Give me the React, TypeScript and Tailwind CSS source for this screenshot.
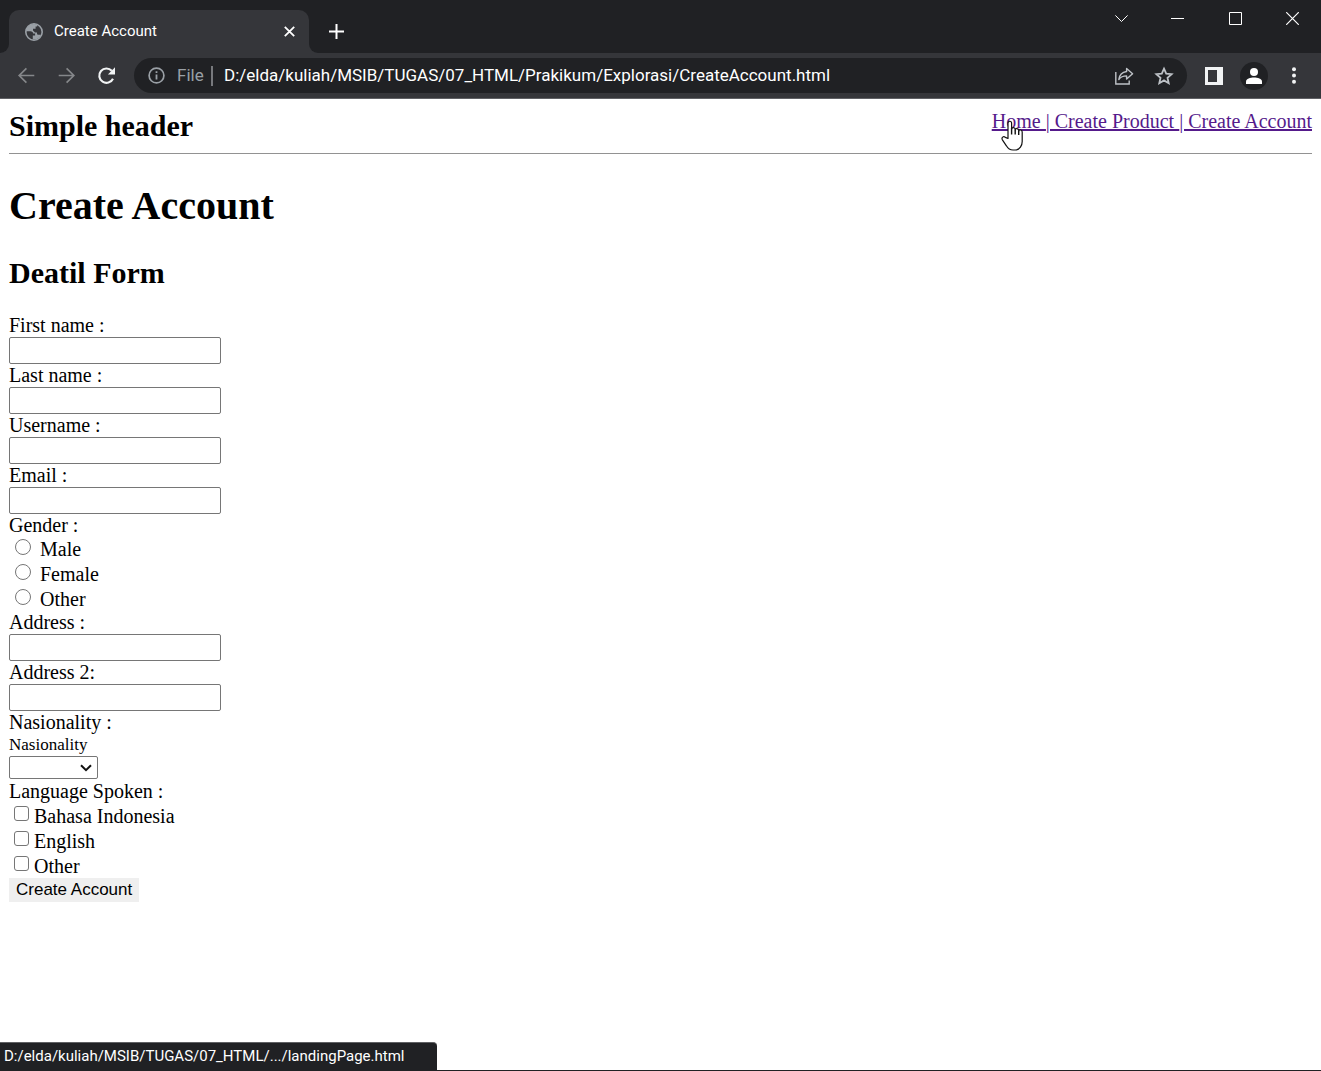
import React from 'react';

function BrowserTab() {
  return (
    <div className="relative flex h-[43px] w-[300px] items-center rounded-t-[10px] bg-[#35363a] pl-4 pr-3">
      <span className="absolute bottom-0 -left-[9px] h-[9px] w-[9px] bg-[#35363a]">
        <span className="block h-full w-full rounded-br-[9px] bg-[#202124]" />
      </span>
      <span className="absolute bottom-0 -right-[9px] h-[9px] w-[9px] bg-[#35363a]">
        <span className="block h-full w-full rounded-bl-[9px] bg-[#202124]" />
      </span>
      <svg className="h-[18px] w-[18px] shrink-0" viewBox="0 0 18 18" aria-hidden="true">
        <circle cx="9" cy="9" r="8.2" fill="#35363a" stroke="#9aa0a6" strokeWidth="1.6" />
        <path
          fill="#9aa0a6"
          d="M8.800 1C5 1 1.500 4 1 8.300h4.500c1.600 0 2.600.9 2.600 2.300h2v2H7.800v3.800c3.500.8 7-1 8.400-4.600h-2.600c-1 0-1.600-.7-1.600-1.600V9.400h-2L8 7.600V5.800h2.600V3.600h1.600V1.800C11.200 1.200 10 1 8.800 1z"
        />
      </svg>
      <span className="ml-[11px] flex-1 text-[15px] text-white">Create Account</span>
      <button type="button" aria-label="Close tab" className="flex h-4 w-4 items-center justify-center">
        <svg className="h-[11px] w-[11px]" viewBox="0 0 11 11" stroke="#fff" strokeWidth="1.800">
          <path d="M.8.8l9.4 9.4M10.2.8L.8 10.2" />
        </svg>
      </button>
    </div>
  );
}

function TitleBar() {
  return (
    <div className="flex h-[53px] items-end bg-[#202124] pl-[9px]">
      <BrowserTab />
      <button type="button" aria-label="New tab" className="ml-[19px] flex h-[43px] w-4 items-center justify-center">
        <svg className="h-[15px] w-[15px]" viewBox="0 0 15 15" stroke="#fff" strokeWidth="2">
          <path d="M7.5 0v15M0 7.5h15" />
        </svg>
      </button>
      <div className="ml-auto flex h-full items-start text-white">
        <button type="button" aria-label="Search tabs" className="flex h-[37px] w-14 items-center justify-center">
          <svg className="h-[13px] w-[13px]" viewBox="0 0 13 13" fill="none" stroke="currentColor">
            <path d="M.4 3.4l6.1 6.1 6.1-6.1" />
          </svg>
        </button>
        <button type="button" aria-label="Minimize" className="flex h-[37px] w-[57px] items-center justify-center">
          <svg className="h-[13px] w-[13px]" viewBox="0 0 13 13" stroke="currentColor">
            <path d="M0 6.5h13" />
          </svg>
        </button>
        <button type="button" aria-label="Maximize" className="flex h-[37px] w-[58px] items-center justify-center">
          <svg className="h-[13px] w-[13px]" viewBox="0 0 13 13" fill="none" stroke="currentColor">
            <path d="M.5.5h12v12H.5z" />
          </svg>
        </button>
        <button type="button" aria-label="Close" className="flex h-[37px] w-[57px] items-center justify-center">
          <svg className="h-[13px] w-[13px]" viewBox="0 0 13 13" stroke="currentColor" strokeWidth="1.2">
            <path d="M.2.2l12.6 12.6M12.8.2L.2 12.8" />
          </svg>
        </button>
      </div>
    </div>
  );
}

function Toolbar() {
  return (
    <div className="flex h-[46px] items-center border-b border-[#606165] bg-[#35363a] pl-4">
      <button type="button" aria-label="Back" className="flex w-5 justify-center">
        <svg className="h-5 w-5" viewBox="0 0 20 20" fill="none" stroke="#85878a" strokeWidth="1.7">
          <path d="M18.3 9.500H3.2M10.4 2.3L3.2 9.500l7.2 7.2" />
        </svg>
      </button>
      <button type="button" aria-label="Forward" className="ml-5 flex w-5 justify-center">
        <svg className="h-5 w-5" viewBox="0 0 20 20" fill="none" stroke="#85878a" strokeWidth="1.7">
          <path d="M2.7 9.500h15.1M10.6 2.3l7.2 7.2-7.2 7.2" />
        </svg>
      </button>
      <button type="button" aria-label="Reload" className="ml-5 flex w-5 justify-center">
        <svg className="h-5 w-5" viewBox="0 0 20 20">
          <path d="M17 12.700A7.2 7.2 0 1 1 15.8 4.800" fill="none" stroke="#f1f3f4" strokeWidth="2.1" />
          <path d="M19 1.300v7.1h-7.1z" fill="#f1f3f4" />
        </svg>
      </button>
      <div className="ml-[18px] flex h-[35px] min-w-0 flex-1 items-center rounded-full bg-[#202124] pl-[14px] pr-[13px]">
        <svg className="h-[17px] w-[17px] shrink-0" viewBox="0 0 17 17">
          <circle cx="8.5" cy="8.5" r="7.4" fill="none" stroke="#9aa0a6" strokeWidth="1.7" />
          <path d="M8.5 7.4v5M8.5 4.2v1.9" stroke="#9aa0a6" strokeWidth="1.8" />
        </svg>
        <span className="ml-3 w-[26px] text-[17px] text-[#9aa0a6]">File</span>
        <span className="ml-2 h-5 w-[2px] shrink-0 bg-[#77797d]" />
        <input
          aria-label="Address and search bar"
          readOnly
          value="D:/elda/kuliah/MSIB/TUGAS/07_HTML/Prakikum/Explorasi/CreateAccount.html"
          className="ml-[11px] min-w-0 flex-1 bg-transparent text-[17px] text-white outline-none"
        />
        <button type="button" aria-label="Share" className="ml-4 flex w-5 justify-center">
          <svg className="h-5 w-5" viewBox="0 0 20 20" fill="none" stroke="#bdc1c6" strokeWidth="1.400">
            <path d="M1.8 6v12h13.4v-3.4" />
            <path strokeLinejoin="round" d="M12.6 2.4l6 5.300-6 5.400v-3.200c-3.400 0-5.900 1-7.800 3.600.6-4.400 3.400-7.300 7.800-8z" />
          </svg>
        </button>
        <button type="button" aria-label="Bookmark" className="ml-5 flex w-5 justify-center">
          <svg className="h-5 w-5" viewBox="0 0 20 20" fill="none" stroke="#bdc1c6" strokeWidth="1.8">
            <path d="M10 2.7l2.2 5 5.4.5-4.1 3.6 1.2 5.4-4.7-2.8-4.7 2.8 1.2-5.4-4.1-3.6 5.400-.5z" />
          </svg>
        </button>
      </div>
      <button type="button" aria-label="Side panel" className="ml-[18px] flex">
        <svg className="h-[18px] w-[18px]" viewBox="0 0 18 18">
          <path fillRule="evenodd" fill="#f1f3f4" d="M0 0h18v18H0zM3 3v12h9V3z" />
        </svg>
      </button>
      <button type="button" aria-label="Profile" className="ml-[17px] flex h-7 w-7 items-center justify-center rounded-full bg-[#202124]">
        <svg className="h-4 w-4" viewBox="0 0 16 16" fill="#fff">
          <circle cx="8" cy="4" r="4" />
          <path d="M0 16v-2.5c0-2.8 4.4-4 8-4s8 1.200 8 4V16z" />
        </svg>
      </button>
      <button type="button" aria-label="Menu" className="ml-4 mr-[17px] flex">
        <svg className="h-5 w-5" viewBox="0 0 20 20" fill="#f1f3f4">
          <circle cx="10" cy="3.200" r="2" />
          <circle cx="10" cy="9.500" r="2" />
          <circle cx="10" cy="15.800" r="2" />
        </svg>
      </button>
    </div>
  );
}

function HandCursor() {
  return (
    <svg className="pointer-events-none absolute left-[9px] top-[11px] h-8 w-6" viewBox="0 0 24 32" aria-hidden="true">
      <path
        fill="#fff"
        stroke="#111"
        strokeWidth="1.2"
        strokeLinejoin="round"
        d="M7 18.500V3.200C7 .6 10.600.6 10.600 3.200V9c0-2 3.600-1.800 3.600.3v.5c.2-1.900 3.500-1.500 3.500.6v.6c.4-1.700 3.500-1.200 3.500.9v9.500c0 4-2.400 8.600-6.900 8.600h-2.300c-3.200 0-5-1.400-6.600-4.200l-4-6c-1.300-2.300 1-4 3-2.400z"
      />
      <path d="M10.600 8v6.500M14.200 9.500v5M17.700 11v4" fill="none" stroke="#111" strokeWidth="1.400" />
    </svg>
  );
}

function TextField({ id, label }: { id: string; label: string }) {
  return (
    <div className="flex flex-col items-start">
      <label htmlFor={id} className="leading-[23px]">{label}</label>
      <input id={id} type="text" className="h-[27px] w-[212px] rounded-[2px] border border-[#767676] bg-white px-1 text-base" />
    </div>
  );
}

function RadioOption({ id, label }: { id: string; label: string }) {
  return (
    <div className="flex h-[25px] items-start pl-[6px]">
      <input id={id} name="gender" type="radio" className="mt-[3px] h-4 w-4 appearance-none rounded-full border border-[#767676] bg-white checked:border-4 checked:border-blue-600" />
      <label htmlFor={id} className="ml-[9px] leading-[26px]">{label}</label>
    </div>
  );
}

function CheckOption({ id, label }: { id: string; label: string }) {
  return (
    <div className="flex h-[25px] items-start pl-[5px]">
      <input id={id} type="checkbox" className="mt-[3px] h-[15px] w-[15px] appearance-none rounded-[3px] border border-[#767676] bg-white checked:bg-blue-600" />
      <label htmlFor={id} className="ml-[5px] leading-[26px]">{label}</label>
    </div>
  );
}

function AccountForm() {
  return (
    <form className="flex flex-col items-start" onSubmit={(e) => e.preventDefault()}>
      <TextField id="first-name" label="First name :" />
      <TextField id="last-name" label="Last name :" />
      <TextField id="username" label="Username :" />
      <TextField id="email" label="Email :" />
      <fieldset>
        <legend className="leading-[22px]">Gender :</legend>
        <RadioOption id="male" label="Male" />
        <RadioOption id="female" label="Female" />
        <RadioOption id="gender-other" label="Other" />
      </fieldset>
      <TextField id="address" label="Address :" />
      <TextField id="address-2" label="Address 2:" />
      <p className="leading-[22px]">Nasionality :</p>
      <label htmlFor="nationality" className="text-[17px] leading-[23px]">Nasionality</label>
      <div className="relative flex">
        <select id="nationality" className="h-[23px] w-[89px] appearance-none rounded-[2px] border border-[#767676] bg-white px-1 text-base leading-5">
          <option value="" />
        </select>
        <svg className="pointer-events-none absolute right-[6px] top-2 h-2 w-3" viewBox="0 0 12 8" fill="none" stroke="#111" strokeWidth="2">
          <path d="M1 1.200l5 5 5-5" />
        </svg>
      </div>
      <fieldset>
        <legend className="leading-[24px]">Language Spoken :</legend>
        <CheckOption id="indonesian" label="Bahasa Indonesia" />
        <CheckOption id="english" label="English" />
        <CheckOption id="language-other" label="Other" />
      </fieldset>
      <button type="submit" className="h-6 bg-[#efefef] px-[7px] font-['Liberation_Sans',Arial,sans-serif] text-[17px] leading-6">
        Create Account
      </button>
    </form>
  );
}

export default function App() {
  return (
    <div className="flex min-h-screen flex-col border-b border-[#202124] bg-white">
      <div className="font-[Roboto,'Segoe_UI',sans-serif]">
        <TitleBar />
        <Toolbar />
      </div>
      <div className="flex-1 px-[9px] font-['Liberation_Serif','Times_New_Roman',serif] text-[20px] text-black">
        <header className="flex h-[55px] items-start justify-between border-b border-[#929292]">
          <h2 className="mt-[10px] text-[30px] font-bold leading-[34px]">Simple header</h2>
          <nav className="relative mt-[10px] whitespace-pre leading-6 text-[#551a8b] underline decoration-2 underline-offset-1">
            <a href="#home">Home </a>
            <a href="#product">| Create Product </a>
            <a href="#account">| Create Account</a>
            <HandCursor />
          </nav>
        </header>
        <main>
          <h1 className="mt-[29px] text-[40px] font-bold leading-[46px]">Create Account</h1>
          <h2 className="mb-6 mt-[27px] text-[30px] font-bold leading-[34px]">Deatil Form</h2>
          <AccountForm />
        </main>
      </div>
      <div className="flex h-7 w-[437px] items-center rounded-tr-[4px] border-t border-[#5f6063] bg-[#202124] pl-1 font-[Roboto,'Segoe_UI',sans-serif] text-[15px] text-white">
        D:/elda/kuliah/MSIB/TUGAS/07_HTML/.../landingPage.html
      </div>
    </div>
  );
}
